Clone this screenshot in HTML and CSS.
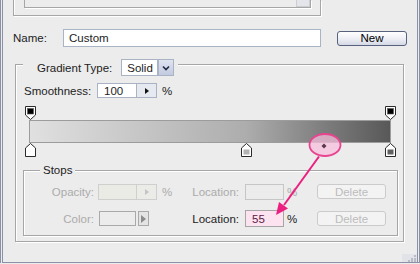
FILE: index.html
```html
<!DOCTYPE html>
<html>
<head>
<meta charset="utf-8">
<link rel="stylesheet" href="styles.css">
</head>
<body>
<div class="page">
  <div class="window">
    <div class="preset-panel">
      <div class="preset-list"><span class="scroll-btn"></span></div>
    </div>

    <div class="name-row">
      <span class="name-label">Name:</span>
      <div class="text-input name-input">Custom</div>
      <button class="btn-new">New</button>
    </div>

    <fieldset class="gradient-group">
      <legend class="gradient-legend">
        <span class="type-label">Gradient Type:</span>
        <span class="select">
          <span class="select-value">Solid</span>
          <span class="select-btn"><svg width="8" height="6" viewBox="0 0 8 6"><path d="M1 1.5L4 4.5L7 1.5" fill="none" stroke="#1f2a44" stroke-width="1.6"/></svg></span>
        </span>
      </legend>

      <div class="smooth-row">
        <span class="smooth-label">Smoothness:</span>
        <span class="spin">
          <span class="spin-value">100</span>
          <span class="spin-btn"><svg width="4" height="6" viewBox="0 0 4 6"><path d="M0 0L4 3L0 6Z" fill="#111"/></svg></span>
        </span>
        <span class="pct">%</span>
      </div>

      <div class="editor">
        <div class="stop-track top-track">
          <svg class="stop" style="left:0%" width="11" height="14" viewBox="0 0 11 14"><path d="M0.5 0.5H10.5V9L5.5 13.5L0.5 9Z" fill="#fff" stroke="#2b2b2b"/><rect x="2.5" y="2.5" width="6" height="5.5" fill="#000" stroke="#555" stroke-width="0.6"/></svg>
          <svg class="stop" style="left:100%" width="11" height="14" viewBox="0 0 11 14"><path d="M0.5 0.5H10.5V9L5.5 13.5L0.5 9Z" fill="#fff" stroke="#2b2b2b"/><rect x="2.5" y="2.5" width="6" height="5.5" fill="#000" stroke="#555" stroke-width="0.6"/></svg>
        </div>
        <div class="gradient-bar"></div>
        <div class="stop-track bottom-track">
          <svg class="stop" style="left:0%" width="11" height="14" viewBox="0 0 11 14"><path d="M5.5 0.5L10.5 5V13.5H0.5V5Z" fill="#fff" stroke="#2b2b2b"/><rect x="2.5" y="6.5" width="6" height="5" fill="#fdfdfd"/></svg>
          <svg class="stop" style="left:60%" width="11" height="14" viewBox="0 0 11 14"><path d="M5.5 0.5L10.5 5V13.5H0.5V5Z" fill="#fff" stroke="#2b2b2b"/><rect x="2.5" y="6.5" width="6" height="5" fill="#b2b2b2"/></svg>
          <svg class="stop" style="left:100%" width="11" height="14" viewBox="0 0 11 14"><path d="M5.5 0.5L10.5 5V13.5H0.5V5Z" fill="#fff" stroke="#2b2b2b"/><rect x="2.5" y="6.5" width="6" height="5" fill="#606060"/></svg>
        </div>
      </div>

      <fieldset class="stops-group">
        <legend class="stops-legend">Stops</legend>
        <div class="stops-grid">
          <span class="lbl disabled">Opacity:</span>
          <span class="field">
            <span class="spin-value off">&nbsp;</span>
            <span class="spin-btn off"><svg width="4" height="6" viewBox="0 0 4 6"><path d="M0 0L4 3L0 6Z" fill="#c4c4c4"/></svg></span>
          </span>
          <span class="pctc disabled">%</span>
          <span class="loc-lbl disabled">Location:</span>
          <span class="loc-input off"></span>
          <span class="pct2 disabled">%</span>
          <span class="del">Delete</span>

          <span class="lbl disabled">Color:</span>
          <span class="field">
            <span class="swatch"></span>
            <span class="swatch-btn"><svg width="5" height="8" viewBox="0 0 5 8"><path d="M0 0L5 4L0 8Z" fill="#8c8c8c"/></svg></span>
          </span>
          <span class="pctc"></span>
          <span class="loc-lbl">Location:</span>
          <span class="loc-input on">55</span>
          <span class="pct2">%</span>
          <span class="del">Delete</span>
        </div>
      </fieldset>
    </fieldset>

    <div class="grip"><svg width="12" height="7" viewBox="0 0 12 7"><g fill="#b9bcc6"><rect x="9" y="0" width="2" height="2"/><rect x="6" y="3" width="2" height="2"/><rect x="9" y="3" width="2" height="2"/><rect x="3" y="5" width="2" height="2"/><rect x="6" y="5" width="2" height="2"/><rect x="9" y="5" width="2" height="2"/></g></svg></div>
  </div>

  <svg class="annotation" width="420" height="264" viewBox="0 0 420 264">
    <ellipse cx="325" cy="145" rx="15.5" ry="11" fill="rgba(246,190,220,0.72)" stroke="#e8448f" stroke-width="1.8"/>
    <path d="M324 143.5L326.5 146L324 148.5L321.5 146Z" fill="#5a3a4c"/>
    <line x1="319" y1="156.5" x2="284" y2="205" stroke="#ec1f80" stroke-width="2"/>
    <path d="M276 215L279 202L288 208.5Z" fill="#ec1f80"/>
  </svg>
</div>
</body>
</html>
```

FILE: styles.css
```css
body {
  margin: 0;
  background: #ececec;
  font-family: "Liberation Sans", Arial, sans-serif;
  font-size: 11.5px;
  color: #222;
}

.page {
  position: relative;
  width: 420px;
  height: 264px;
  overflow: hidden;
}

.window {
  box-sizing: border-box;
  width: 420px;
  height: 263px;
  border-left: 3px double #8b91a7;
  border-right: 3px double #8b91a7;
  border-bottom: 1px solid #8b91a7;
  display: flex;
  flex-direction: column;
}

/* preset panel (cut off at top) */
.preset-panel {
  box-sizing: border-box;
  margin-left: 10px;
  width: 308px;
  height: 16px;
  border: 1px solid #a6a6a6;
  border-top: 0;
  box-shadow: inset 1px 0 0 #fff, 1px 1px 0 #fff;
  padding-left: 10px;
  flex: none;
}

.preset-list {
  box-sizing: border-box;
  width: 287px;
  height: 8px;
  border: 1px solid #a6a6a6;
  border-top: 0;
  box-shadow: 1px 1px 0 #fff;
  display: flex;
  justify-content: flex-end;
}

.scroll-btn {
  box-sizing: border-box;
  width: 14px;
  height: 7px;
  border: 1px solid #cdcdd2;
  border-top: 0;
  background: #e4e5ea;
}

/* name row */
.name-row {
  display: flex;
  align-items: center;
  margin-top: 13px;
  padding-left: 10px;
  height: 18px;
  flex: none;
}

.name-label {
  width: 50px;
}

.text-input {
  box-sizing: border-box;
  background: #fff;
  border: 1px solid #a9b4c4;
  height: 18px;
  display: flex;
  align-items: center;
}

.name-input {
  width: 258px;
  padding-left: 5px;
}

.btn-new {
  box-sizing: border-box;
  margin-left: 16px;
  width: 70px;
  height: 15px;
  border: 1px solid #56627e;
  border-radius: 3px;
  background: linear-gradient(#ffffff, #eceef4 55%, #d5d9e5);
  font: inherit;
  color: #000;
  padding: 0;
  line-height: 13px;
}

/* gradient group */
.gradient-group {
  box-sizing: border-box;
  margin: 6px 0 0 12px;
  width: 389px;
  min-width: 0;
  border: 1px solid #a6a6a6;
  box-shadow: inset 1px 1px 0 #fff, 1px 1px 0 #fff;
  padding: 0 5px 5px 7px;
  flex: none;
}

.gradient-legend {
  padding: 6px 4px 0 14px;
  margin: 0;
  display: flex;
  align-items: center;
  background: #ececec;
}

.type-label {
  margin-right: 9px;
}

.select {
  display: flex;
  height: 17px;
}

.select-value {
  box-sizing: border-box;
  width: 37px;
  height: 17px;
  border: 1px solid #a9b3c3;
  background: #fff;
  padding-left: 5px;
  display: flex;
  align-items: center;
}

.select-btn {
  box-sizing: border-box;
  width: 16px;
  height: 17px;
  border: 1px solid #a9b3c3;
  background: linear-gradient(#dfe4f1, #c2cadf);
  display: flex;
  align-items: center;
  justify-content: center;
}

.smooth-row {
  display: flex;
  align-items: center;
  margin-top: 7px;
  padding-left: 1px;
  height: 15px;
}

.smooth-label {
  width: 73px;
}

.spin {
  display: flex;
  height: 15px;
}

.spin-value {
  box-sizing: border-box;
  width: 40px;
  height: 15px;
  border: 1px solid #a9b3c3;
  background: #fff;
  padding-left: 6px;
  display: flex;
  align-items: center;
}

.spin-btn {
  box-sizing: border-box;
  width: 20px;
  height: 15px;
  border: 1px solid #a9b3c3;
  border-left: 0;
  background: #e7e9f0;
  display: flex;
  align-items: center;
  justify-content: center;
}

.pct {
  margin-left: 5px;
}

/* gradient editor */
.editor {
  margin: 7px 0 0 6px;
  width: 362px;
}

.stop-track {
  position: relative;
  margin: 0 1px;
}

.top-track {
  height: 15px;
}

.bottom-track {
  height: 14px;
}

.stop {
  position: absolute;
  top: 0;
  margin-left: -5px;
}

.top-track .stop {
  top: 1px;
}

.gradient-bar {
  box-sizing: border-box;
  height: 23px;
  border: 1px solid #9c9c9c;
  background: linear-gradient(to right, #e0e0e0 0%, #adadad 60%, #7d7d7d 82%, #585858 100%);
}

/* stops group */
.stops-group {
  box-sizing: border-box;
  margin: 7px 0 0 0;
  width: 375px;
  min-width: 0;
  border: 1px solid #a6a6a6;
  box-shadow: inset 1px 1px 0 #fff, 1px 1px 0 #fff;
  padding: 6px 0 8px 0;
}

.stops-legend {
  margin-left: 16px;
  padding: 0 3px;
  line-height: 13px;
  background: #ececec;
}

.stops-grid {
  display: grid;
  grid-template-columns: 74px 64px 10px 73px 42px 30px 69px;
  grid-auto-rows: 17px;
  row-gap: 10px;
  align-items: center;
}

.disabled {
  color: #ababab;
}

.lbl {
  text-align: right;
  padding-right: 4px;
}

.loc-lbl {
  text-align: right;
  padding-right: 6px;
}

.field {
  display: flex;
  align-items: center;
}

.spin-value.off {
  width: 39px;
  height: 16px;
  border-color: #cfcfcf;
  background: #ebebe5;
}

.spin-btn.off {
  height: 16px;
  border-color: #cfcfcf;
  background: #ebebe8;
}

.swatch {
  box-sizing: border-box;
  margin-left: 1px;
  width: 37px;
  height: 15px;
  border: 1px solid #a9a9a9;
  background: #ececec;
}

.swatch-btn {
  box-sizing: border-box;
  margin-left: 2px;
  width: 11px;
  height: 15px;
  border: 1px solid #a9a9a9;
  background: #e4e4e4;
  display: flex;
  align-items: center;
  justify-content: center;
}

.loc-input {
  box-sizing: border-box;
  width: 39px;
  display: flex;
  align-items: center;
  padding-left: 6px;
}

.loc-input.off {
  height: 16px;
  border: 1px solid #c6c6c6;
  background: #ececec;
}

.loc-input.on {
  height: 17px;
  border: 1px solid #a6a6a6;
  background: #fde2ef;
  color: #5a2145;
}

.pct2 {
  padding-left: 0;
}

.del {
  box-sizing: border-box;
  width: 69px;
  height: 15px;
  border: 1px solid #cbcbcb;
  border-radius: 3px;
  background: #f3f3f3;
  color: #bcbcbc;
  display: flex;
  align-items: center;
  justify-content: center;
}

.grip {
  margin-top: auto;
  align-self: flex-end;
  width: 15px;
  height: 8px;
  background: #e2e3e8;
  display: flex;
  align-items: flex-end;
  justify-content: flex-end;
}

.annotation {
  position: absolute;
  left: 0;
  top: 0;
  pointer-events: none;
}
```
